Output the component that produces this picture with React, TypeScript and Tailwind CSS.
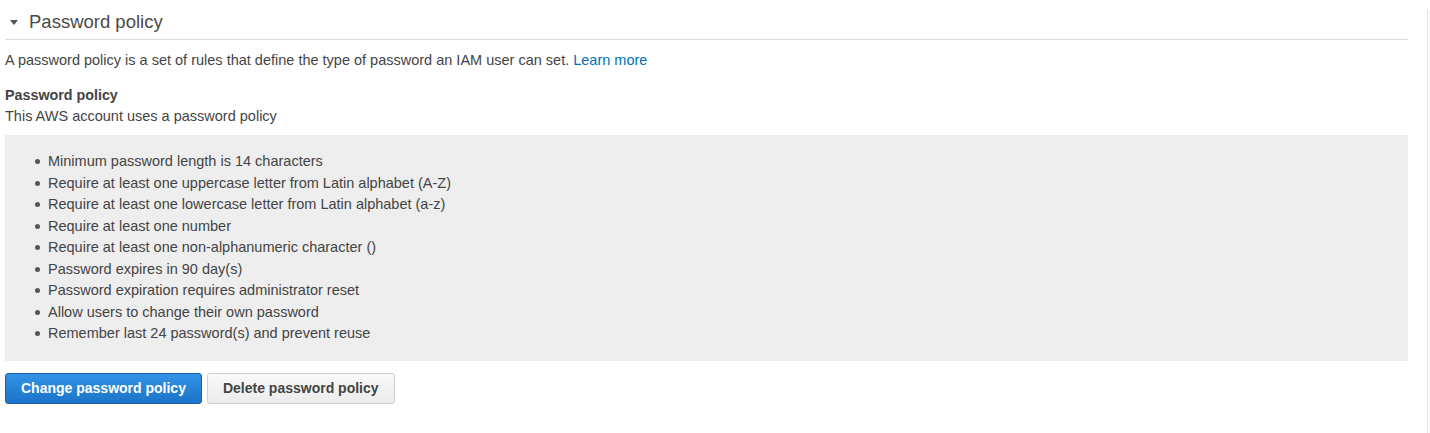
const RULES = [
  "Minimum password length is 14 characters",
  "Require at least one uppercase letter from Latin alphabet (A-Z)",
  "Require at least one lowercase letter from Latin alphabet (a-z)",
  "Require at least one number",
  "Require at least one non-alphanumeric character ()",
  "Password expires in 90 day(s)",
  "Password expiration requires administrator reset",
  "Allow users to change their own password",
  "Remember last 24 password(s) and prevent reuse",
];

export default function App() {
  return (
    <div className="flex h-[433px] w-[1430px] bg-white font-['Liberation_Sans',Arial,sans-serif] text-[#444]">
      <div className="w-[1408px] pl-[5px]">
        {/* section header */}
        <div className="flex h-[40px] items-start border-b border-[#dcdcdc] pt-[11px]">
          <svg viewBox="0 0 8 5" className="ml-[5px] mr-[11px] mt-[9px] h-[5px] w-[8px]" fill="#555">
            <path d="M0 0h8L4 5z" />
          </svg>
          <span className="text-[18.5px] leading-[22px] text-[#4a4a4a]">Password policy</span>
        </div>

        <p className="mt-[10px] text-[14.5px] leading-[20px]">
          A password policy is a set of rules that define the type of password an IAM user can set.{" "}
          <a className="text-[#0073bb]">Learn more</a>
        </p>

        <div className="mt-[15px] text-[14.3px] font-bold leading-[21px]">Password policy</div>
        <div className="text-[14.5px] leading-[21px]">This AWS account uses a password policy</div>

        <div className="mt-[8px] bg-[#eeeeee] py-[16px]">
          <ul>
            {RULES.map((rule) => (
              <li key={rule} className="flex items-center text-[14.5px] leading-[21.5px]">
                <span className="ml-[30px] mr-[8px] h-[5px] w-[5px] rounded-full bg-[#555]" />
                {rule}
              </li>
            ))}
          </ul>
        </div>

        <div className="mt-[12px] flex gap-[5px]">
          <button className="h-[31px] rounded-[3px] border border-[#1a5fa6] bg-gradient-to-b from-[#3393e6] to-[#1b74c9] px-[15px] text-[14px] font-bold text-white">
            Change password policy
          </button>
          <button className="h-[31px] rounded-[3px] border border-[#cfcfcf] bg-gradient-to-b from-[#fafafa] to-[#ebebeb] px-[15px] text-[14px] font-bold text-[#444]">
            Delete password policy
          </button>
        </div>
      </div>
      <div className="ml-[19px] mt-[10px] w-px bg-[#e3e3e3]" />
    </div>
  );
}
